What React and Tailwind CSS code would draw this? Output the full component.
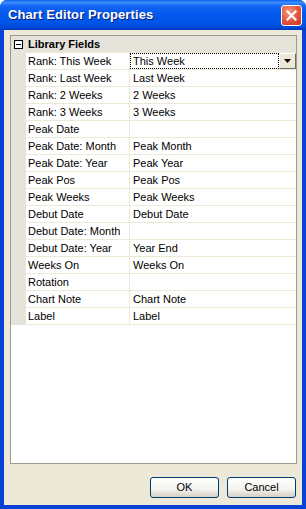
import React from "react";

const rows = [
  ["Rank: This Week", "This Week"],
  ["Rank: Last Week", "Last Week"],
  ["Rank: 2 Weeks", "2 Weeks"],
  ["Rank: 3 Weeks", "3 Weeks"],
  ["Peak Date", ""],
  ["Peak Date: Month", "Peak Month"],
  ["Peak Date: Year", "Peak Year"],
  ["Peak Pos", "Peak Pos"],
  ["Peak Weeks", "Peak Weeks"],
  ["Debut Date", "Debut Date"],
  ["Debut Date: Month", ""],
  ["Debut Date: Year", "Year End"],
  ["Weeks On", "Weeks On"],
  ["Rotation", ""],
  ["Chart Note", "Chart Note"],
  ["Label", "Label"],
];

export default function App() {
  return (
    <div
      className="w-[306px] h-[509px] flex flex-col rounded-t-[7px] bg-[#0842D6] px-[4px] pb-[4px]"
      style={{ fontFamily: '"Liberation Sans", Arial, sans-serif' }}
    >
      <div className="h-[30px] -mx-[4px] flex items-center justify-between pl-[8px] pr-[4px] rounded-t-[7px] bg-[linear-gradient(to_bottom,#0A5FEF_0%,#3D8FFB_8%,#1565F5_20%,#0058EE_45%,#0055E8_75%,#0048D6_92%,#0039B8_100%)]">
        <span className="text-white text-[13px] font-bold tracking-[0.1px] [text-shadow:1px_1px_0_#0A1F7A]">
          Chart Editor Properties
        </span>
        <div className="w-[21px] h-[21px] rounded-[3px] border border-white bg-[radial-gradient(circle_at_35%_30%,#F39A7D,#E2533A_55%,#C8351D)] flex items-center justify-center">
          <svg width="11" height="11" viewBox="0 0 11 11">
            <path d="M1.5 1.5 L9.5 9.5 M9.5 1.5 L1.5 9.5" stroke="white" strokeWidth="2.2" strokeLinecap="square" />
          </svg>
        </div>
      </div>
      <div className="flex-1 bg-[#ECE9D8] flex flex-col pt-[5px] pl-[6px] pr-[5px]">
        <div className="h-[429px] bg-white border border-[#9C9A8C] flex flex-col">
          <div className="h-[17px] bg-[#E6E3DA] border-b border-[#ECE9D8] flex items-center">
            <div className="w-[15px] flex items-center justify-center">
              <div className="w-[9px] h-[9px] border border-black bg-white flex items-center justify-center">
                <div className="w-[5px] h-[1px] bg-black" />
              </div>
            </div>
            <span className="text-[11px] font-bold text-black pl-[2px]">Library Fields</span>
          </div>
          <div className="flex">
            <div className="w-[15px] bg-[#E6E3DA]" />
            <div className="flex-1 flex flex-col">
              {rows.map(([k, v], i) => (
                <div key={k} className="h-[17px] flex border-b border-[#ECE9D8]">
                  <div className="w-[104px] border-r border-[#ECE9D8] text-[11px] text-black pl-[2px] leading-[16px] whitespace-nowrap overflow-hidden">
                    {k}
                  </div>
                  {i === 0 ? (
                    <div className="flex-1 flex">
                      <div className="flex-1 border border-dotted border-black text-[11px] leading-[14px] pl-[2px] text-black">
                        {v}
                      </div>
                      <div className="w-[17px] h-[16px] bg-[#ECE9D8] border border-t-white border-l-white border-r-[#716F64] border-b-[#716F64] flex items-center justify-center">
                        <svg width="7" height="4" viewBox="0 0 7 4">
                          <path d="M0 0 H7 L3.5 4 Z" fill="black" />
                        </svg>
                      </div>
                    </div>
                  ) : (
                    <div className="flex-1 text-[11px] leading-[16px] pl-[3px] text-black">{v}</div>
                  )}
                </div>
              ))}
            </div>
          </div>
        </div>
        <div className="flex justify-end gap-[8px] mt-[13px] pr-[1px]">
          <button className="w-[69px] h-[21px] rounded-[3px] border border-[#003C74] bg-[linear-gradient(to_bottom,#FFFFFF,#F3F3EF_60%,#D6D0C5)] text-[11px] text-black">
            OK
          </button>
          <button className="w-[69px] h-[21px] rounded-[3px] border border-[#003C74] bg-[linear-gradient(to_bottom,#FFFFFF,#F3F3EF_60%,#D6D0C5)] text-[11px] text-black">
            Cancel
          </button>
        </div>
      </div>
    </div>
  );
}
